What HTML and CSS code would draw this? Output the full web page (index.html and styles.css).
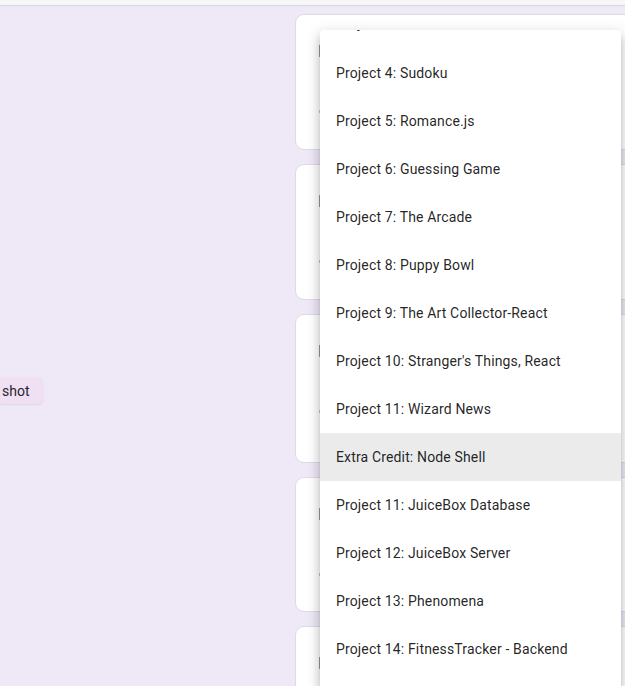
FILE: index.html
```html
<!DOCTYPE html>
<html>
<head>
<meta charset="utf-8">
<link rel="stylesheet" href="styles.css">
</head>
<body>
<div class="topbar"></div>
<div class="main">
  <div class="side">
    <button class="shot-btn">shot</button>
  </div>
  <div class="cards">
    <div class="card c1"><span class="mark m1"></span><span class="mark m2"></span></div>
    <div class="card c2"><span class="mark m1"></span><span class="mark m2"></span></div>
    <div class="card c3"><span class="mark m1"></span><span class="mark m2"></span></div>
    <div class="card c4"><span class="mark m1"></span><span class="mark m2"></span></div>
    <div class="card c5"><span class="mark m1"></span></div>
  </div>
</div>
<div class="menu">
  <ul class="menu-list">
    <li class="item first">Project 3: Pixel Art Maker</li>
    <li class="item">Project 4: Sudoku</li>
    <li class="item">Project 5: Romance.js</li>
    <li class="item">Project 6: Guessing Game</li>
    <li class="item">Project 7: The Arcade</li>
    <li class="item">Project 8: Puppy Bowl</li>
    <li class="item">Project 9: The Art Collector-React</li>
    <li class="item">Project 10: Stranger's Things, React</li>
    <li class="item">Project 11: Wizard News</li>
    <li class="item active">Extra Credit: Node Shell</li>
    <li class="item">Project 11: JuiceBox Database</li>
    <li class="item">Project 12: JuiceBox Server</li>
    <li class="item">Project 13: Phenomena</li>
    <li class="item">Project 14: FitnessTracker - Backend</li>
  </ul>
</div>
</body>
</html>
```

FILE: styles.css
```css
html, body {
  margin: 0;
  padding: 0;
  height: 686px;
  overflow: hidden;
  background: #efe9f7;
  font-family: Roboto, "Liberation Sans", sans-serif;
}

.topbar {
  height: 5px;
  background: #f7f7f8;
  border-bottom: 1px solid #d9d7dc;
}

.main {
  display: flex;
  height: 680px;
  background: #efe9f7;
  overflow: hidden;
}

.side {
  width: 295px;
  flex: 0 0 295px;
  padding-top: 371px;
  box-sizing: border-box;
}

.shot-btn {
  display: block;
  height: 27px;
  width: 43px;
  padding: 0 0 0 2px;
  text-align: left;
  border: none;
  border-radius: 0 5px 5px 0;
  background: #efe0f3;
  color: #2a2430;
  font-family: Roboto, "Liberation Sans", sans-serif;
  font-size: 14px;
  box-shadow: 0 1px 2px rgba(0,0,0,0.08);
}

.cards {
  flex: 0 0 420px;
  display: flex;
  flex-direction: column;
  gap: 14px;
  padding-top: 8px;
}

.card {
  position: relative;
  flex: 0 0 auto;
  background: #fff;
  border: 1px solid #dedbe3;
  border-radius: 9px;
  box-sizing: border-box;
}

.c1 { height: 136px; }
.c2 { height: 136px; }
.c3 { height: 149px; }
.c4 { height: 135px; }
.c5 { height: 120px; }

.mark {
  position: absolute;
  left: 23px;
  width: 2px;
  background: #9a9a9a;
}

.m1 { top: 30px; height: 12px; }
.m2 { top: 95px; height: 3px; background: #c8c8c8; }

.menu {
  position: absolute;
  left: 320px;
  top: 30px;
  width: 301px;
  height: 656px;
  background: #fff;
  border-radius: 4px 4px 0 0;
  overflow: hidden;
  box-shadow: 0 5px 5px -3px rgba(0,0,0,0.2), 0 8px 10px 1px rgba(0,0,0,0.14), 0 3px 14px 2px rgba(0,0,0,0.12);
}

.menu-list {
  list-style: none;
  margin: -29px 0 0 0;
  padding: 0;
}

.item {
  height: 48px;
  display: flex;
  align-items: center;
  padding-left: 16px;
  font-size: 14px;
  letter-spacing: 0.15px;
  color: rgba(0,0,0,0.87);
  white-space: nowrap;
}

.item.first {
  box-sizing: border-box;
  padding-bottom: 4px;
}

.item.active {
  background: #ebebeb;
}
```
